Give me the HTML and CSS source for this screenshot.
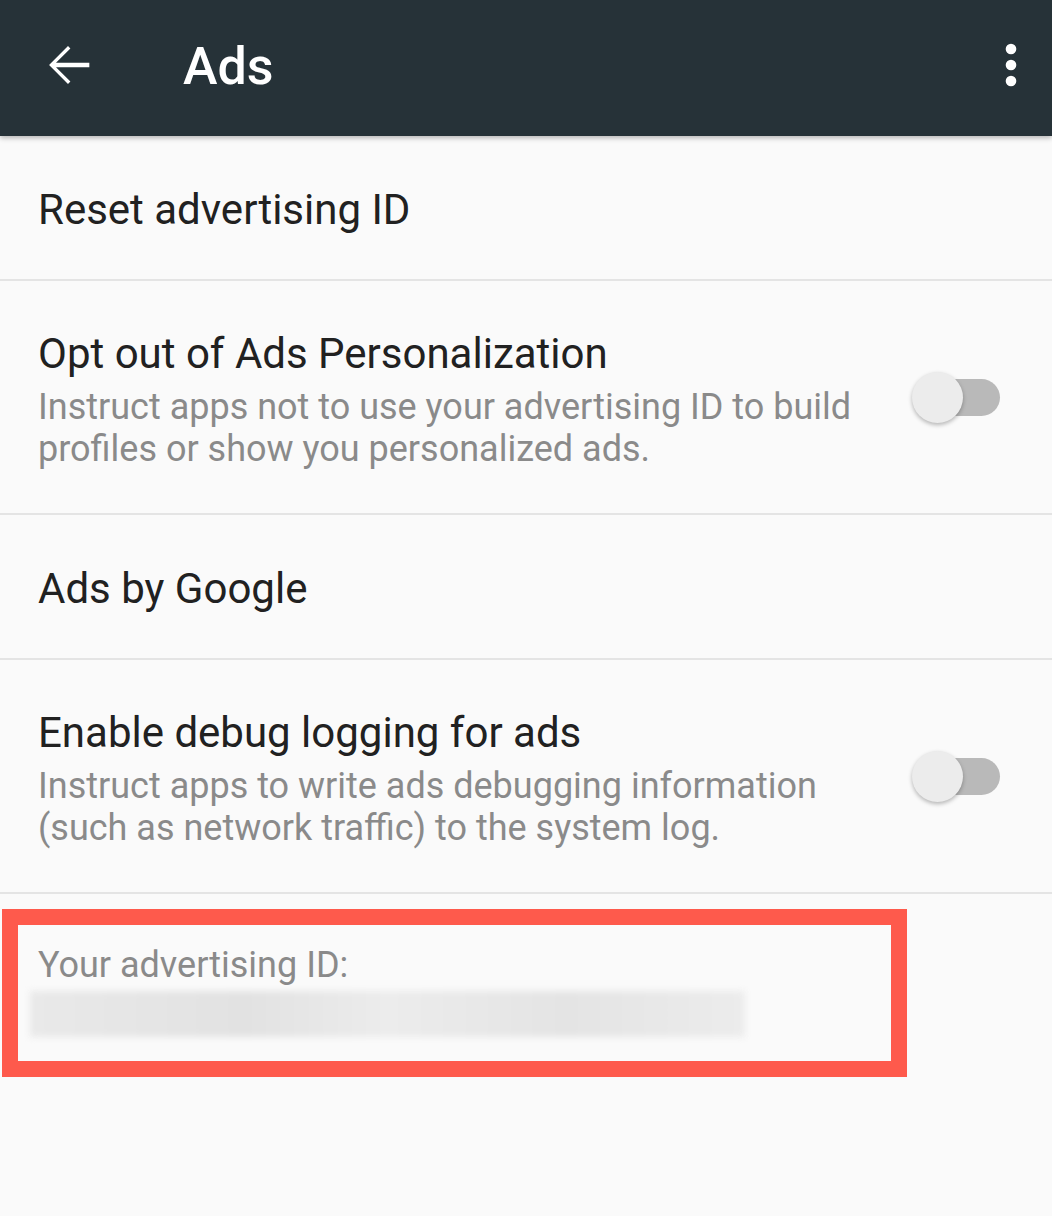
FILE: index.html
```html
<!DOCTYPE html>
<html lang="en">
<head>
<meta charset="utf-8">
<title>Ads</title>
<link rel="stylesheet" href="styles.css">
</head>
<body>
<header class="toolbar">
  <svg class="tb-icon" viewBox="0 0 24 24" aria-hidden="true"><path d="M20 11.2H7.5l5.4-5.4L12 4.9 4.9 12l7.1 7.1.9-.9-5.4-5.4H20v-1.6z" fill="#fff"/></svg>
  <h1 class="tb-title">Ads</h1>
  <svg class="tb-icon tb-more" viewBox="0 0 24 24" aria-hidden="true"><circle cx="12" cy="6" r="2" fill="#fff"/><circle cx="12" cy="12" r="2" fill="#fff"/><circle cx="12" cy="18" r="2" fill="#fff"/></svg>
</header>
<main class="list">
  <div class="row single">
    <div class="text"><div class="primary">Reset advertising ID</div></div>
  </div>
  <div class="row double">
    <div class="text">
      <div class="primary">Opt out of Ads Personalization</div>
      <div class="secondary">Instruct apps not to use your advertising ID to build profiles or show you personalized ads.</div>
    </div>
    <div class="switch"><span class="track"></span><span class="thumb"></span></div>
  </div>
  <div class="row single">
    <div class="text"><div class="primary">Ads by Google</div></div>
  </div>
  <div class="row double">
    <div class="text">
      <div class="primary">Enable debug logging for ads</div>
      <div class="secondary">Instruct apps to write ads debugging information (such as network traffic) to the system log.</div>
    </div>
    <div class="switch"><span class="track"></span><span class="thumb"></span></div>
  </div>
  <section class="adid">
    <div class="adid-label">Your advertising ID:</div>
    <div class="adid-value"></div>
  </section>
</main>
</body>
</html>
```

FILE: styles.css
```css
html, body {
  margin: 0;
  padding: 0;
  background: #fafafa;
}
body {
  font-family: Roboto, "Noto Sans", "Liberation Sans", sans-serif;
  width: 1052px;
  min-height: 1216px;
}
.toolbar {
  position: relative;
  z-index: 2;
  height: 136px;
  box-sizing: border-box;
  background: #263238;
  display: flex;
  align-items: flex-start;
  padding: 33px 9px 0 36px;
  box-shadow: 0 2px 5px rgba(0, 0, 0, 0.28);
}
.tb-icon {
  width: 64px;
  height: 64px;
  flex: none;
}
.tb-title {
  margin: 2px 0 0 83px;
  font-size: 52px;
  line-height: 64px;
  font-weight: 500;
  color: #ffffff;
  flex: 1;
}
.list {
  display: flex;
  flex-direction: column;
}
.row {
  display: flex;
  align-items: center;
  gap: 24px;
  padding: 0 52px 0 38px;
  border-bottom: 2px solid #e4e4e4;
}
.row.single {
  align-items: flex-start;
  padding-top: 49px;
  height: 94px;
}
.row.double {
  height: 232px;
}
.row.double .text {
  align-self: flex-start;
  padding-top: 48px;
}
.text {
  flex: 1;
  min-width: 0;
}
.primary {
  font-size: 42px;
  line-height: 50px;
  color: #212121;
}
.secondary {
  margin-top: 7px;
  font-size: 36px;
  line-height: 42px;
  color: #8a8a8a;
}
.switch {
  position: relative;
  flex: none;
  width: 88px;
  height: 51px;
}
.track {
  position: absolute;
  left: 18px;
  top: 7px;
  width: 70px;
  height: 37px;
  border-radius: 19px;
  background: #b9b9b9;
}
.thumb {
  position: absolute;
  left: 0;
  top: 0;
  width: 51px;
  height: 51px;
  border-radius: 50%;
  background: #ececec;
  box-shadow: 0 2px 4px rgba(0, 0, 0, 0.28);
}
.adid {
  margin: 15px 0 0 2px;
  width: 905px;
  height: 168px;
  box-sizing: border-box;
  border: 16px solid #fe5a4c;
  padding: 19px 0 0 12px;
}
.adid-label {
  margin-left: 8px;
  font-size: 36px;
  line-height: 42px;
  color: #8a8a8a;
}
.adid-value {
  margin-top: 5px;
  width: 715px;
  height: 46px;
  background: linear-gradient(90deg, #e9e9e9 0%, #e2e2e2 30%, #ececec 50%, #e4e4e4 75%, #ececec 100%);
  filter: blur(3px);
}
```
